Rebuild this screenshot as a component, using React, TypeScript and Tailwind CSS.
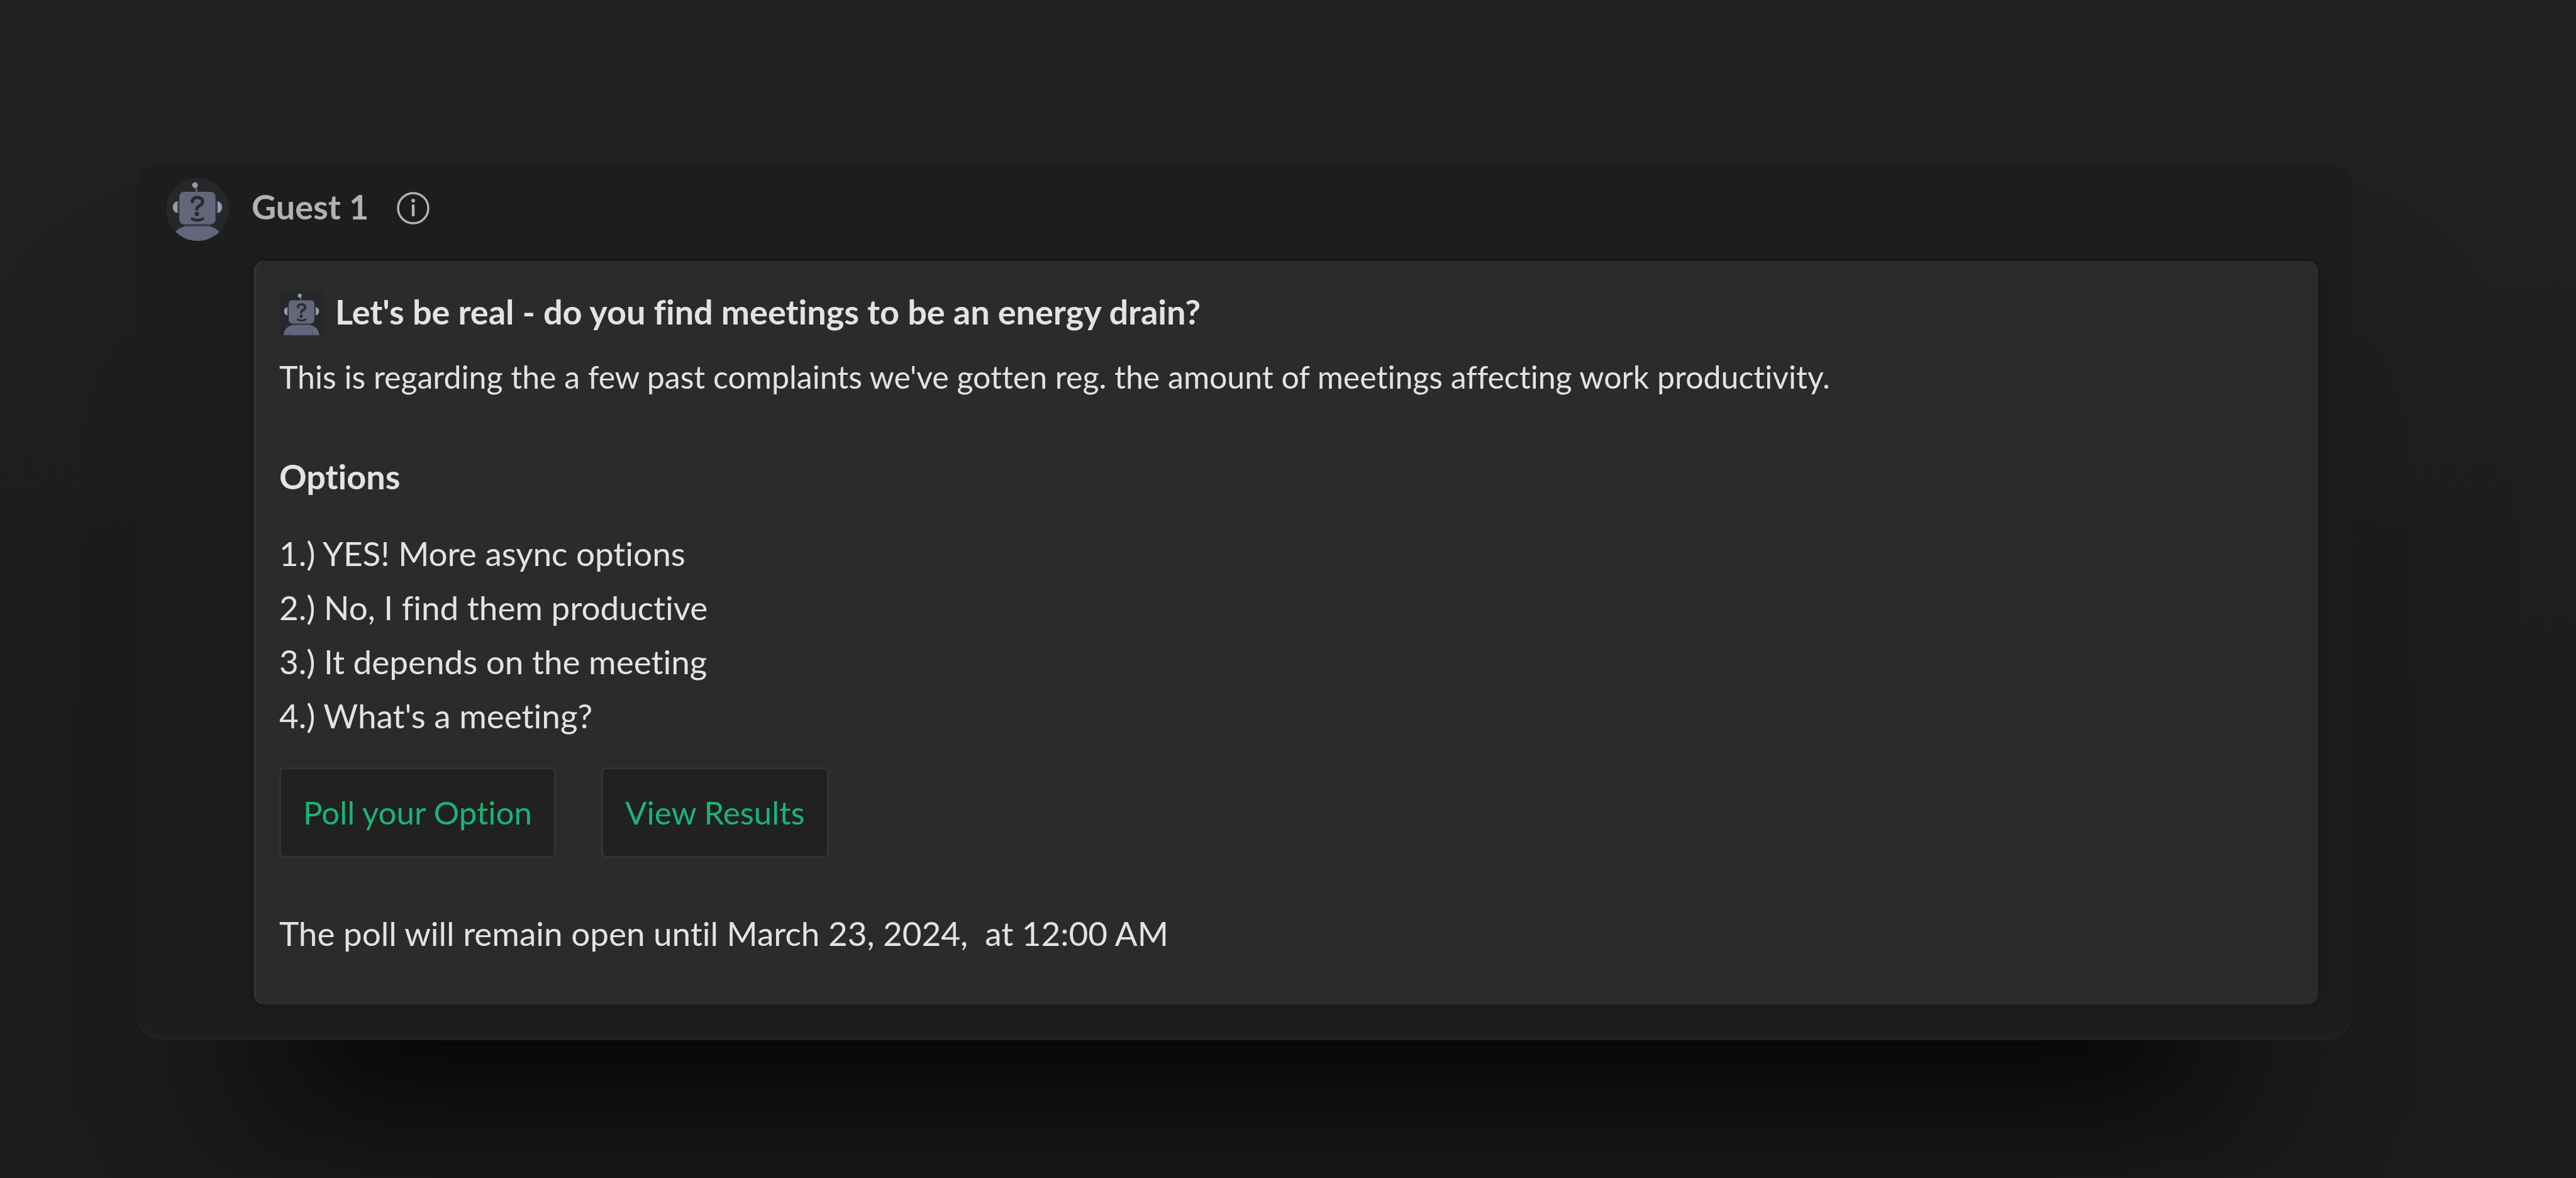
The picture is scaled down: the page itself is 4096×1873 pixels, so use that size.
const options = [
  "YES! More async options",
  "No, I find them productive",
  "It depends on the meeting",
  "What's a meeting?",
];

function Robot({ className }: { className: string }) {
  return (
    <svg viewBox="0 0 528 528" className={className} aria-hidden="true">
      <rect width="528" height="528" fill="#252729" />
      <path d="M250 78L260 122" stroke="#62677c" strokeWidth="14" />
      <circle cx="243" cy="60" r="24" fill="#9499ad" />
      <path d="M97 196C74 200 57 220 57 245C57 270 74 290 97 294Z" fill="#9499ad" />
      <path d="M432 196C455 200 471 220 471 245C471 270 455 290 432 294Z" fill="#9499ad" />
      <path d="M104 190V300M424 190V300" stroke="#3a3d44" strokeWidth="10" />
      <path d="M150 398H380" stroke="#3a3d44" strokeWidth="18" />
      <rect x="112" y="116" width="303" height="272" rx="38" fill="#62677c" />
      <g fill="none" stroke="#292b2e" strokeLinecap="round">
        <path
          d="M221 198C221 175 240 163 263 163C290 163 307 178 307 200C307 231 259 232 259 260"
          strokeWidth="28"
        />
        <path d="M219 342Q264 368 309 342" strokeWidth="23" />
      </g>
      <circle cx="259" cy="301" r="19" fill="#292b2e" />
      <path d="M51 528C55 456 108 407 178 407H347C417 407 470 456 474 528Z" fill="#62677c" />
      <path d="M124 486V528M392 486V528" stroke="#45495a" strokeWidth="9" />
    </svg>
  );
}

function InfoIcon() {
  return (
    <svg viewBox="0 0 52 52" className="size-[52px]" fill="none" aria-hidden="true">
      <circle cx="26" cy="26" r="24" stroke="#b2b2b2" strokeWidth="3.5" />
      <circle cx="26" cy="14" r="3" fill="#b2b2b2" />
      <path d="M26 22V37" stroke="#b2b2b2" strokeWidth="4.5" strokeLinecap="round" />
    </svg>
  );
}

export default function App() {
  return (
    <main className="min-h-screen overflow-hidden bg-linear-to-b from-[#222222] to-[#1d1d1d] to-60% pt-[260px] pr-[356px] pl-[217px] font-['Lato',sans-serif] text-[#e3e3e3] [font-variant-ligatures:none]">
      <article className="rounded-[38px] bg-[#1d1d1d] pt-[23px] pr-[54px] pb-[57px] shadow-[0_260px_640px_40px_rgba(0,0,0,0.1),0_350px_220px_-228px_rgba(0,0,0,0.7),inset_0_-10px_0_#202020]">
        <header className="flex items-start pl-[47px]">
          <Robot className="size-[100px] rounded-full" />
          <h1 className="ml-[36px] text-[54px] leading-[92px] font-bold text-[#b2b2b2]">Guest 1</h1>
          <button type="button" aria-label="Guest info" className="mt-[22px] ml-[45px]">
            <InfoIcon />
          </button>
        </header>

        <section className="mt-[32px] ml-[187px] rounded-2xl bg-[#2b2b2b] px-[40px] pt-[47px] pb-[73px] shadow-[0_2px_16px_rgba(0,0,0,0.3),inset_3px_0_0_#363636]">
          <div className="flex items-start gap-[18px]">
            <Robot className="size-[71px]" />
            <h2 className="text-[54px] leading-[68px] font-bold">
              Let's be real - do you find meetings to be an energy drain?
            </h2>
          </div>
          <p className="mt-[26px] text-[50px] leading-[80px]">
            This is regarding the a few past complaints we've gotten reg. the amount of meetings affecting
            work productivity.
          </p>

          <h3 className="mt-[79px] text-[54px] leading-[80px] font-bold">Options</h3>
          <ol className="mt-[39px] text-[53px] leading-[86px]">
            {options.map((option, index) => (
              <li key={option}>
                {index + 1}.) {option}
              </li>
            ))}
          </ol>

          <div className="mt-[39px] flex gap-[72px]">
            <button
              type="button"
              className="h-[144px] rounded-lg border-[3px] border-[#333333] bg-[#212121] px-[35px] text-[51px] text-[#1bb377]"
            >
              Poll your Option
            </button>
            <button
              type="button"
              className="h-[144px] rounded-lg border-[3px] border-[#333333] bg-[#212121] px-[35px] text-[51px] text-[#1bb377]"
            >
              View Results
            </button>
          </div>

          <p className="mt-[80px] text-[53px] leading-[80px] whitespace-pre-wrap">
            {"The poll will remain open until March 23, 2024,  at 12:00 AM"}
          </p>
        </section>
      </article>
    </main>
  );
}
